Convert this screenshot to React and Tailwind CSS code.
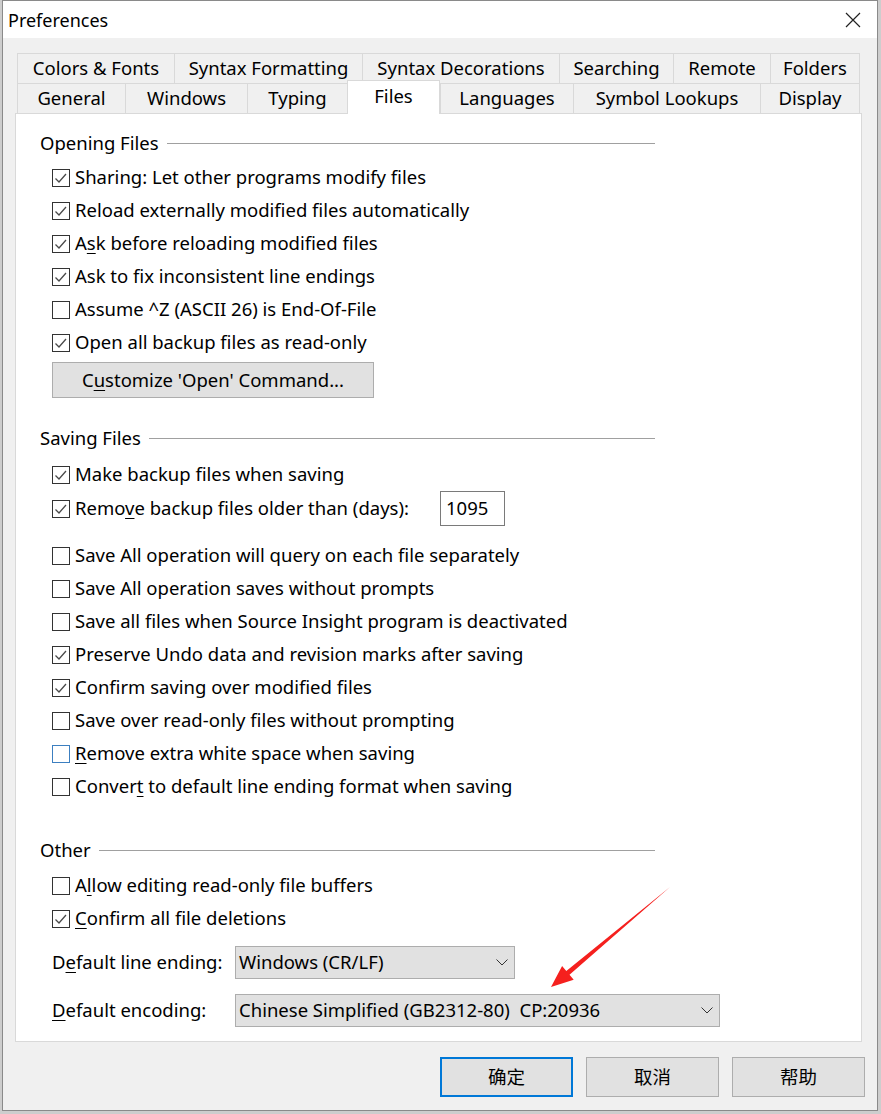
import React from 'react';

const FONT = "font-['Noto_Sans','Noto_Sans_CJK_SC',sans-serif]";

const ROW1 = [
  ['Colors & Fonts', 157],
  ['Syntax Formatting', 188],
  ['Syntax Decorations', 197],
  ['Searching', 114],
  ['Remote', 97],
  ['Folders', 90],
];
const ROW2 = [
  ['General', 108],
  ['Windows', 122],
  ['Typing', 100],
  ['Files', 93],
  ['Languages', 133],
  ['Symbol Lookups', 187],
  ['Display', 100],
];

function U({ children }) {
  return <span className="underline decoration-1 underline-offset-[3px]">{children}</span>;
}

function Box({ checked, blue }) {
  return (
    <svg width="18" height="18" viewBox="0 0 18 18" className="shrink-0">
      <rect x="0.5" y="0.5" width="17" height="17" fill="white" stroke={blue ? '#3c7fc0' : '#333333'} />
      {checked && <path d="M3.5 9.5 L7 13 L14 5" fill="none" stroke="#4a4a4a" strokeWidth="1.3" />}
    </svg>
  );
}

function Check({ checked, blue, children, className = '' }) {
  return (
    <div className={`flex h-[33px] items-center gap-[5px] pl-[36px] ${className}`}>
      <Box checked={checked} blue={blue} />
      <span className="whitespace-nowrap">{children}</span>
    </div>
  );
}

function Group({ title, className = '' }) {
  return (
    <div className={`flex h-[33px] w-[639px] items-center pl-[24px] ${className}`}>
      <span className="whitespace-nowrap">{title}</span>
      <div className="ml-[8px] h-px flex-1 bg-[#a0a0a0]" />
    </div>
  );
}

function Chevron() {
  return (
    <svg width="12" height="7" viewBox="0 0 12 7" className="shrink-0">
      <path d="M0.5 0.5 L6 6 L11.5 0.5" fill="none" stroke="#333" strokeWidth="1" />
    </svg>
  );
}

function Select({ value, width }) {
  return (
    <div
      className="flex h-[33px] items-center justify-between border border-[#adadad] bg-[#e1e1e1] pl-[3px] pr-[6px]"
      style={{ width }}
    >
      <span className="whitespace-pre">{value}</span>
      <Chevron />
    </div>
  );
}

function Button({ children, primary }) {
  return (
    <div
      className={`flex h-[40px] w-[133px] items-center justify-center bg-[#e1e1e1] ${
        primary ? 'border-2 border-[#0078d7]' : 'border border-[#adadad]'
      }`}
    >
      {children}
    </div>
  );
}

export default function App() {
  return (
    <div className={`relative h-[1114px] w-[881px] overflow-hidden bg-[#cdcdcd] pl-[2px] text-[18.5px] leading-none text-black ${FONT}`}>
      <div className="flex h-[1111px] w-[876px] flex-col border border-[#8a8a8a] bg-[#f0f0f0]">
        {/* title bar */}
        <div className="flex h-[37px] shrink-0 items-center justify-between bg-white pl-[5px] pr-[16px]">
          <span className="text-[18px]">Preferences</span>
          <svg width="16" height="16" viewBox="0 0 16 16">
            <path d="M1 1 L15 15 M15 1 L1 15" stroke="#222" strokeWidth="1.2" />
          </svg>
        </div>

        {/* body */}
        <div className="flex flex-1 flex-col pl-[12px] pt-[15px]">
          {/* tabs */}
          <div className="ml-[2px] flex h-[30px]">
            {ROW1.map(([t, w], i) => (
              <div
                key={t}
                className={`flex h-[30px] items-center justify-center whitespace-nowrap border-l border-t border-[#d9d9d9] bg-[#f0f0f0] ${
                  i === ROW1.length - 1 ? 'border-r' : ''
                }`}
                style={{ width: w }}
              >
                {t}
              </div>
            ))}
          </div>
          <div className="ml-[2px] flex h-[30px] items-start">
            {ROW2.map(([t, w], i) =>
              t === 'Files' ? (
                <div
                  key={t}
                  className="relative z-10 -mt-[3px] flex h-[34px] items-start justify-center border-x border-t border-[#d9d9d9] bg-white pt-[6px]"
                  style={{ width: w }}
                >
                  {t}
                </div>
              ) : (
                <div
                  key={t}
                  className={`flex h-[30px] items-center justify-center whitespace-nowrap border-l border-t border-[#d9d9d9] bg-[#f0f0f0] ${
                    i === ROW2.length - 1 ? 'border-r' : ''
                  }`}
                  style={{ width: w }}
                >
                  {t}
                </div>
              )
            )}
          </div>

          {/* panel */}
          <div className="flex h-[929px] w-[847px] flex-col border border-[#d9d9d9] bg-white pt-[13px]">
            <Group title="Opening Files" />
            <Check checked className="mt-[1px]">Sharing: Let other programs modify files</Check>
            <Check checked>Reload externally modified files automatically</Check>
            <Check checked>A<U>s</U>k before reloading modified files</Check>
            <Check checked>Ask to fix inconsistent line endings</Check>
            <Check>Assume ^Z (ASCII 26) is End-Of-File</Check>
            <Check checked>Open all backup files as read-only</Check>
            <div className="ml-[36px] mt-[3px] flex h-[36px] w-[322px] items-center justify-center border border-[#adadad] bg-[#e1e1e1]">
              C<U>u</U>stomize 'Open' Command...
            </div>

            <Group title="Saving Files" className="mt-[24px]" />
            <Check checked className="mt-[3px]">Make backup files when saving</Check>
            <div className="flex h-[35px] items-center">
              <Check checked className="w-[424px]">
                Remo<U>v</U>e backup files older than (days):
              </Check>
              <div className="flex h-[35px] w-[65px] items-center border border-[#7a7a7a] bg-white pl-[5px]">1095</div>
            </div>
            <Check className="mt-[13px]">Save All operation will query on each file separately</Check>
            <Check>Save All operation saves without prompts</Check>
            <Check>Save all files when Source Insight program is deactivated</Check>
            <Check checked>Preserve Undo data and revision marks after saving</Check>
            <Check checked>Confirm saving over modified files</Check>
            <Check>Save over read-only files without prompting</Check>
            <Check blue><U>R</U>emove extra white space when saving</Check>
            <Check>Conver<U>t</U> to default line ending format when saving</Check>

            <Group title="Other" className="mt-[31px]" />
            <Check className="mt-[2px]">A<U>l</U>low editing read-only file buffers</Check>
            <Check checked><U>C</U>onfirm all file deletions</Check>

            <div className="mt-[11px] flex items-center pl-[36px]">
              <span className="w-[183px] whitespace-nowrap">D<U>e</U>fault line ending:</span>
              <Select value="Windows (CR/LF)" width={280} />
            </div>
            <div className="mt-[15px] flex items-center pl-[36px]">
              <span className="w-[183px] whitespace-nowrap"><U>D</U>efault encoding:</span>
              <Select value="Chinese Simplified (GB2312-80)  CP:20936" width={485} />
            </div>
          </div>

          {/* buttons */}
          <div className="mt-[15px] flex justify-end gap-[13px] pr-[12px]">
            <Button primary>确定</Button>
            <Button>取消</Button>
            <Button>帮助</Button>
          </div>
        </div>
      </div>

      {/* annotation arrow */}
      <svg className="pointer-events-none absolute left-0 top-0" width="881" height="1114">
        <polygon
          points="670,887 569.5,974.7 573.7,979.7 551,987 562.1,965.9 566.3,970.9"
          fill="#f5201e"
        />
      </svg>
    </div>
  );
}
